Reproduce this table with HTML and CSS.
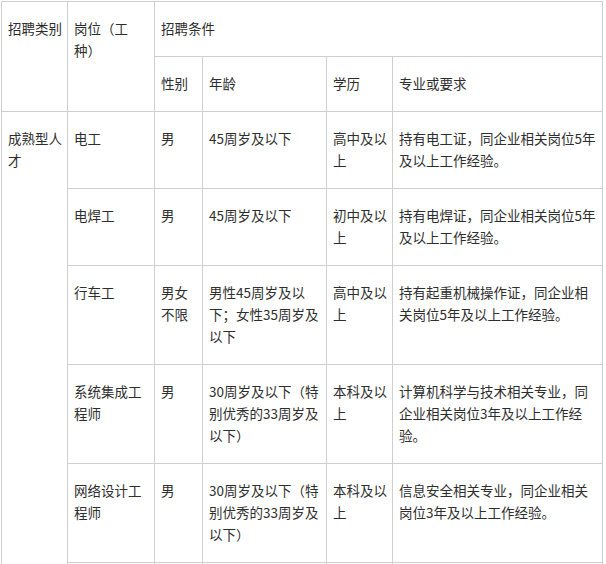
FILE: index.html
```html
<!DOCTYPE html>
<html lang="zh-CN">
<head>
<meta charset="utf-8">
<title>招聘条件</title>
<link rel="stylesheet" href="styles.css">
</head>
<body>
<div class="wrap">
<table class="jobs">
  <colgroup>
    <col class="c1"><col class="c2"><col class="c3"><col class="c4"><col class="c5"><col class="c6">
  </colgroup>
  <tr>
    <td rowspan="2">招聘类别</td>
    <td rowspan="2">岗位（工<br>种）</td>
    <td colspan="4">招聘条件</td>
  </tr>
  <tr>
    <td>性别</td>
    <td>年龄</td>
    <td>学历</td>
    <td>专业或要求</td>
  </tr>
  <tr>
    <td rowspan="6">成熟型人<br>才</td>
    <td>电工</td>
    <td>男</td>
    <td>45周岁及以下</td>
    <td>高中及以<br>上</td>
    <td>持有电工证，同企业相关岗位5年<br>及以上工作经验。</td>
  </tr>
  <tr>
    <td>电焊工</td>
    <td>男</td>
    <td>45周岁及以下</td>
    <td>初中及以<br>上</td>
    <td>持有电焊证，同企业相关岗位5年<br>及以上工作经验。</td>
  </tr>
  <tr>
    <td>行车工</td>
    <td>男女<br>不限</td>
    <td>男性45周岁及以<br>下；女性35周岁及<br>以下</td>
    <td>高中及以<br>上</td>
    <td>持有起重机械操作证，同企业相<br>关岗位5年及以上工作经验。</td>
  </tr>
  <tr>
    <td>系统集成工<br>程师</td>
    <td>男</td>
    <td>30周岁及以下（特<br>别优秀的33周岁及<br>以下）</td>
    <td>本科及以<br>上</td>
    <td>计算机科学与技术相关专业，同<br>企业相关岗位3年及以上工作经<br>验。</td>
  </tr>
  <tr>
    <td>网络设计工<br>程师</td>
    <td>男</td>
    <td>30周岁及以下（特<br>别优秀的33周岁及<br>以下）</td>
    <td>本科及以<br>上</td>
    <td>信息安全相关专业，同企业相关<br>岗位3年及以上工作经验。</td>
  </tr>
  <tr class="more">
    <td></td><td></td><td></td><td></td><td></td>
  </tr>
</table>
</div>
</body>
</html>
```

FILE: styles.css
```css
html, body {
  margin: 0;
  padding: 0;
  background: #ffffff;
}

.wrap {
  padding: 1px 0 0 1px;
}

.jobs {
  border-collapse: collapse;
  table-layout: fixed;
  width: 601px;
  font-family: "Microsoft YaHei", "Noto Sans CJK SC", "Noto Sans", sans-serif;
  font-size: 13.5px;
  line-height: 22px;
  color: #2e2e2e;
}

.c1 { width: 66px; }
.c2 { width: 87px; }
.c3 { width: 48px; }
.c4 { width: 124px; }
.c5 { width: 66px; }
.c6 { width: 210px; }

.jobs td {
  border: 1px solid #cfcfcf;
  padding: 15px 2px 17px 6px;
  vertical-align: top;
  text-align: left;
  white-space: nowrap;
}

.jobs .more td {
  height: 40px;
}
```
